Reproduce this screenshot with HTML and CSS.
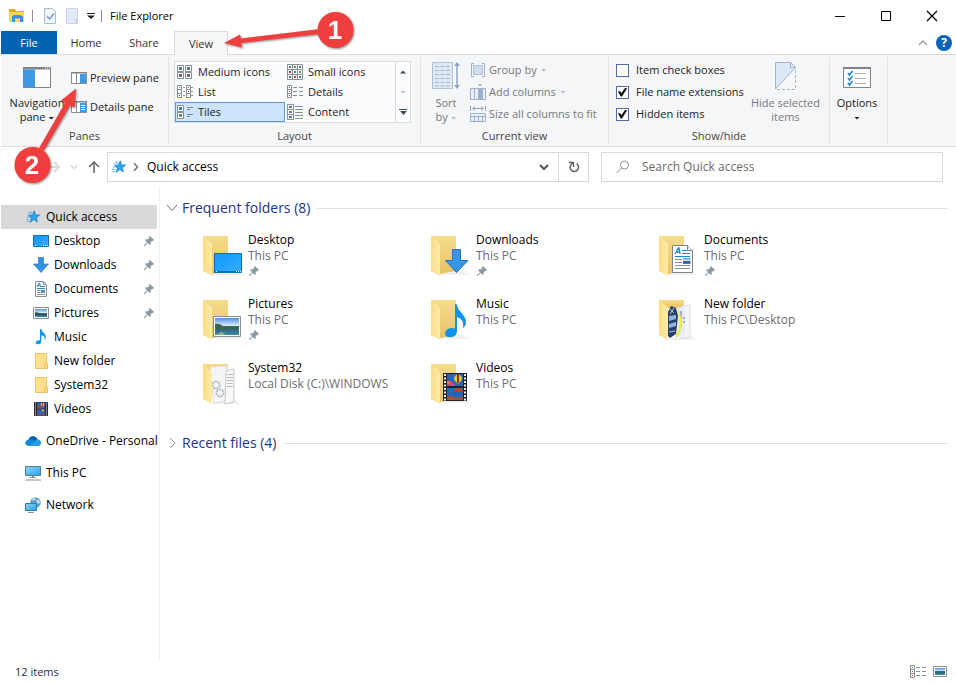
FILE: index.html
```html
<!DOCTYPE html>
<html lang="en">
<head>
<meta charset="utf-8">
<title>File Explorer</title>
<link rel="stylesheet" href="styles.css">
</head>
<body>
<svg class="defs" aria-hidden="true">
  <defs>
    <linearGradient id="gFront" x1="0" x2="1"><stop offset="0" stop-color="#fbdc86"/><stop offset="1" stop-color="#ffeaa9"/></linearGradient>
    <linearGradient id="gBack" x1="0" y1="0" x2="0" y2="1"><stop offset="0" stop-color="#f6dc8c"/><stop offset="1" stop-color="#e8c263"/></linearGradient>
    <linearGradient id="gBlue" x1="0" y1="0" x2="1" y2="1"><stop offset="0" stop-color="#1b97f5"/><stop offset=".5" stop-color="#1fa2ff"/><stop offset="1" stop-color="#3cb0ff"/></linearGradient>
    <linearGradient id="gSky" x1="0" y1="0" x2="0" y2="1"><stop offset="0" stop-color="#4f8fe6"/><stop offset=".45" stop-color="#dcebf8"/><stop offset=".5" stop-color="#3b6b62"/><stop offset=".65" stop-color="#2f6478"/><stop offset="1" stop-color="#3f86b8"/></linearGradient>
    <linearGradient id="gPc" x1="0" y1="0" x2="1" y2="1"><stop offset="0" stop-color="#8bd4fb"/><stop offset="1" stop-color="#2aa0ee"/></linearGradient>
  </defs>
  <symbol id="pin" viewBox="0 0 10 10"><path d="M6 0 10 4 9 5 8.300 4.700 6.600 6.400 6.700 8.300 5.900 9 3.700 6.900 0.800 10 0 10 0 9.200 3.100 6.300 1 4.100 1.700 3.300 3.600 3.400 5.300 1.700 5 1Z" fill="#8d99a3"/></symbol>
  <symbol id="star" viewBox="-1 -1 18 18"><path d="M9.500 1 10.800 5.700 15.500 5.800 11.700 8.800 13 13.500 9 10.900 4.600 14 6.200 9.300 3 6.400 7.300 6Z" fill="#29a5f4" stroke="#1579c4" stroke-width=".8"/><path d="M3.500 2.500h4M2 4.500h5M1 8h3M0 10.500h4M1 13h2.500" stroke="#4aa9e0" stroke-width=".9"/></symbol>
  <symbol id="desktop" viewBox="0 0 16 16"><path d="M.5 2.500h15v11H.5z" fill="url(#gBlue)" stroke="#0b6fb8"/><path d="M2 12.500h1M10 12.500h1M12 12.500h1M14 12.500h1" stroke="#fff"/></symbol>
  <symbol id="down" viewBox="0 0 16 16"><path d="M5.500.5h5v6.500h5L8 15.500.5 7h5z" fill="#3492e4" stroke="#2b78c4" stroke-width=".7"/></symbol>
  <symbol id="doc" viewBox="0 0 16 16"><path d="M2.500.5h8l3 3v12h-11z" fill="#fff" stroke="#8b8f93"/><path d="M10.500.5v3h3" fill="none" stroke="#8b8f93"/><path d="m4 6 2-4h.7l.8 4M4.600 4.700h2.500" fill="none" stroke="#1b85cf"/><path d="M8 5.500h4M4 7.500h8" stroke="#1b85cf"/><path d="M4 9.500h3.500M4 11.500h3.500M4 13.500h8" stroke="#8b8f93"/><path d="M8 9h4v3H8z" fill="#4f8fad"/></symbol>
  <symbol id="picture" viewBox="0 0 16 16"><path d="M.5 2.500h15v11H.5z" fill="#fff" stroke="#8b8f93"/><path d="M2 4h12v8H2z" fill="url(#gSky)"/><path d="M2 7q4 .5 6 1.500T14 9v1.500L2 10z" fill="#285b50"/></symbol>
  <symbol id="music" viewBox="0 0 16 16"><path d="M7 0h1.300Q8.500 2.500 11 4.300q3 2.500 1.200 6l-.9 1q1.500-4.300-3-5v6.200q0 2-2.300 2.700-2.700.6-3.200-1.100-.2-2.200 2.600-2.800 1.300-.1 1.600.1z" fill="#0c94ee"/></symbol>
  <symbol id="folder" viewBox="0 0 16 16"><path d="M2.500.5h11v8.500l1 1v5.500h-12z" fill="#ffe08a" stroke="#eac564"/><path d="M13.500 9 12 10.500v5" fill="none" stroke="#e5b94e"/></symbol>
  <symbol id="video" viewBox="0 0 16 16"><path d="M1 1h14v14H1z" fill="#2b2b2b"/><path d="M4 1.500h8v6H4zM4 8.500h8v6H4z" fill="#2c5fb8"/><path d="M4 5h3l2 1.500v1H4zM4 12.500l4 1 4-1v2H4z" fill="#9c4b32"/><path d="M8 2h3l.7 1.500L10 6 7.500 4zM8 8.500h3.500L10 11z" fill="#e8b632"/><path d="M9 2h1v3.500H9z" fill="#c43824"/><path d="M2.500 1.500v13M13.500 1.500v13" stroke="#ddd" stroke-dasharray="1 1"/></symbol>
  <symbol id="cloud" viewBox="0 0 16 16"><path d="M4.500 13Q.5 13 .2 10 .5 7 3.500 6.500 5 3 8.500 3.200q3 .3 4 3.300 3.200.3 3.300 3.500-.2 3-3.300 3z" fill="#1189d9"/><path d="M3.500 6.500Q5 3 8.500 3.200q3 .3 4 3.300-2 0-3.200 1.200Q6.500 5.900 3.500 6.500z" fill="#0a60b5"/><path d="m4 13 5-3.500 3.500-3q3.200.3 3.300 3.500-.2 3-3.300 3z" fill="#239fe8"/></symbol>
  <symbol id="pc" viewBox="0 0 16 16"><path d="M.5 1.500h15v9H.5z" fill="url(#gPc)" stroke="#4d7f9e"/><path d="M5 12.500h6M0 15h16" stroke="#86929a"/><path d="M7 11h2v1H7z" fill="#86929a"/></symbol>
  <symbol id="network" viewBox="0 0 16 16"><circle cx="10.500" cy="5.500" r="5.200" fill="#5a9cc0"/><path d="M7 2q3-2 4-1l-1 2-2 1zM11 3l3-.5 1 3-2 2z" fill="#bfe0ec"/><path d="M.5 6.500h11v7H.5z" fill="url(#gPc)" stroke="#2f7db3"/><path d="M3 15.500h6" stroke="#86929a"/></symbol>
  <symbol id="bigfolder" viewBox="0 0 44 44"><path d="M6 41h34l-9-5z" fill="#000" opacity=".06"/><path d="M1 2h25v35L10 40z" fill="url(#gBack)"/><path d="M1 2 9 9q1 1 1 3v30L1 37z" fill="url(#gFront)"/></symbol>
  <symbol id="chev" viewBox="0 0 12 12"><path d="m2 4 4 4 4-4" fill="none" stroke="currentColor" stroke-width="2"/></symbol>
  <symbol id="thumb" viewBox="0 0 7 7"><path d="M.5.5h6v6h-6z" fill="#fff" stroke="#8b8f93"/><path d="M2 2h3v3H2z" fill="#4b7fa8"/></symbol>
</svg>

<header class="titlebar">
  <svg class="app" viewBox="0 0 18 16"><path d="M1 1h6l1 2h8v4H1z" fill="#e8a920"/><path d="M1 4h15v10H1z" fill="#ffd75e"/><path d="M4 14V8.500L6 7h6l3 1.500V14h-3v-3.500H7V14z" fill="#3b93e0"/></svg>
  <span class="rule"></span>
  <button class="quick" aria-label="Properties"><svg viewBox="0 0 14 16"><path d="M1.500.5h8l3 3v12h-11z" fill="#f1f5fb" stroke="#a9bbd2"/><path d="m4 8 2.500 3L11 5.500" fill="none" stroke="#8a9fc4" stroke-width="1.600"/></svg></button>
  <button class="quick" aria-label="New folder"><svg viewBox="0 0 14 16"><path d="M1.500.5h11v15h-11z" fill="#e3ebf6" stroke="#c7d5e8"/><path d="M12.500 10 11 11.500v4" fill="none" stroke="#b7c8df"/></svg></button>
  <button class="more" aria-label="Customize Quick Access Toolbar"><svg viewBox="0 0 8 6"><path d="M0 .5h8" stroke="#222"/><path d="M0 2.500h8L4 6z" fill="#222"/></svg></button>
  <span class="rule"></span>
  <h1>File Explorer</h1>
  <div class="window-buttons">
    <button aria-label="Minimize"><svg viewBox="0 0 12 12"><path d="M1 6.500h10" stroke="#000"/></svg></button>
    <button aria-label="Maximize"><svg viewBox="0 0 12 12"><path d="M1.500 1.500h9v9h-9z" fill="none" stroke="#000"/></svg></button>
    <button aria-label="Close"><svg viewBox="0 0 12 12"><path d="m1 1 10 10M11 1 1 11" stroke="#000" stroke-width="1.200"/></svg></button>
  </div>
</header>

<nav class="tabs">
  <button class="file">File</button>
  <button>Home</button>
  <button>Share</button>
  <button class="active">View</button>
  <div class="help">
    <button aria-label="Minimize the Ribbon"><svg class="up" viewBox="0 0 10 8"><path d="m1 6 4-4 4 4" fill="none" stroke="#9a9a9a" stroke-width="1.300"/></svg></button>
    <button class="question" aria-label="Help">?</button>
  </div>
</nav>

<section class="ribbon">
  <div class="group">
    <div class="body panes">
      <button class="large"><svg viewBox="0 0 28 22"><path d="M.5.5h27v20H.5z" fill="#fdfdfe" stroke="#808488"/><path d="M0 0h28v2.500H0z" fill="#808488"/><path d="M1 2.500h11V20H1z" fill="#3e9ae4"/><path d="M22 1h1M24 1h1M26 1h1" stroke="#fff"/></svg><span>Navigation<br>pane <i class="tri"></i></span></button>
      <div class="stack wide">
        <button class="small"><svg viewBox="0 0 16 16"><path d="M.5 2.500h15v11H.5zM5.500 3v10" fill="#fff" stroke="#8b8f93"/><path d="M0 2h16v1.500H0z" fill="#808488"/><path d="M9 4h6v9H9z" fill="#3e9ae4"/></svg>Preview pane</button>
        <button class="small"><svg viewBox="0 0 16 16"><path d="M.5 2.500h15v11H.5zM5.500 3v10" fill="#fff" stroke="#8b8f93"/><path d="M0 2h16v1.500H0z" fill="#808488"/><path d="M9 4h6v9H9z" fill="#3e9ae4"/><path d="M10 6.500h4M10 8.500h4M10 10.500h4" stroke="#fff"/></svg>Details pane</button>
      </div>
    </div>
    <h2>Panes</h2>
  </div>
  <div class="group">
    <div class="body">
      <div class="gallery">
        <div class="views">
          <button><svg viewBox="0 0 16 14"><use href="#thumb" width="7" height="7"/><use href="#thumb" x="8" width="7" height="7"/><use href="#thumb" y="7" width="7" height="7"/><use href="#thumb" x="8" y="7" width="7" height="7"/><path d="M2 10h3M10 10h3" stroke="#c0392b"/></svg>Medium icons</button>
          <button><svg viewBox="0 0 16 16"><path d="M.5.500h15v15H.5zM5.500.500v15M10.500.500v15M.5 5.500h15M.5 10.500h15" fill="#fff" stroke="#8b8f93"/><path d="M2 3h2M12 3h2M7 8h2M2 13h2M12 13h2" stroke="#4b7fa8" stroke-width="2"/><path d="M7 3h2M12 8h2" stroke="#4c9a5c" stroke-width="2"/><path d="M2 8h2M7 13h2" stroke="#b54a3b" stroke-width="2"/></svg>Small icons</button>
          <button><svg viewBox="0 0 16 14"><path d="M.5.500h4v12h-4zM.5 4.500h4M.5 8.500h4M9.500.500h4v12h-4zM9.500 4.500h4M9.500 8.500h4M6 2.500h2M6 6.500h2M6 10.500h2M14 2.500h2M14 6.500h2M14 10.500h2" fill="none" stroke="#8b8f93"/><path d="M2 2.500h1M11 2.500h1" stroke="#2a8a4a"/><path d="M2 10.500h1M11 6.500h1" stroke="#c22"/></svg>List</button>
          <button><svg viewBox="0 0 16 14"><path d="M.5.500h4v12h-4zM.5 4.500h4M.5 8.500h4M6 2.500h4M6 6.500h4M6 10.500h4M12 2.500h4M12 6.500h4M12 10.500h4" fill="none" stroke="#8b8f93"/><path d="M2 2.500h1" stroke="#2a8a4a"/><path d="M2 6.500h1" stroke="#36c"/><path d="M2 10.500h1" stroke="#c22"/></svg>Details</button>
          <button class="selected"><svg viewBox="0 0 16 14"><use href="#thumb" width="7" height="7"/><use href="#thumb" y="7" width="7" height="7"/><path d="M10 2.500h6M10 4.500h3M10 9.500h6M10 11.500h3" stroke="#7d858c"/><path d="M2 11.500h3" stroke="#d9a441"/></svg>Tiles</button>
          <button><svg viewBox="0 0 16 16"><path d="M.5.500h6v15h-6zM.5 5.500h6M.5 10.500h6" fill="#fff" stroke="#8b8f93"/><path d="M2 3h3M2 8h3M2 13h3" stroke="#4b7fa8" stroke-width="2"/><path d="M8 2.500h8M8 8.500h8M8 14.500h8" stroke="#8b8f93"/><path d="M8 5.500h8M8 11.500h8" stroke="#5b9bf0"/></svg>Content</button>
        </div>
        <div class="scroller">
          <button aria-label="Row up"><i class="tri up"></i></button>
          <button aria-label="Row down"><i class="tri pale"></i></button>
          <button aria-label="More"><svg viewBox="0 0 8 6"><path d="M0 .5h8" stroke="#3f4b5c"/><path d="M1 2h7L4.500 6z" fill="#3f4b5c"/></svg></button>
        </div>
      </div>
    </div>
    <h2>Layout</h2>
  </div>
  <div class="group">
    <div class="body current">
      <button class="large off" disabled><svg viewBox="0 0 28 28"><path d="M.5.500h20v26H.5z" fill="#dfe8f5" stroke="#b3c1da"/><path d="M3 4.500h15M3 8.500h15M3 12.500h15M3 16.500h15M3 20.500h15M3 24h15" stroke="#a9b9d6" stroke-dasharray="4 1.500"/><path d="M25 2v23" stroke="#8fa4c8" stroke-width="1.500"/><path d="m25 0 3 4h-6zM25 27l3-4h-6z" fill="#8fa4c8"/></svg><span>Sort<br>by <i class="tri pale"></i></span></button>
      <div class="stack">
        <button class="small off" disabled><svg viewBox="0 0 16 16"><path d="M4 1.500H1.500v13H4M12 1.500h2.500v13H12" fill="none" stroke="#9fb0cc"/><path d="M3.500 3.500h9v9h-9z" fill="#cfdcf0" stroke="#b3c1da"/></svg>Group by <i class="tri pale"></i></button>
        <button class="small off" disabled><svg viewBox="0 0 16 16"><path d="M.5 4.500h15v11H.5zM4.500 4.500v11M12.500 4.500v11" fill="#e9eff8" stroke="#9fb0cc"/><path d="M8 4h4v11H8zM8 0h4l-2 2.500z" fill="#9fb0cc"/></svg>Add columns <i class="tri pale"></i></button>
        <button class="small off" disabled><svg viewBox="0 0 16 16"><path d="M.5 7.500h15v8H.5zM.5 10.500h15M4.500 10v5M8.500 10v5M12.500 10v5" fill="#e9eff8" stroke="#9fb0cc"/><path d="M.5 0v5M15.500 0v5M3 2.500h10M5 .5l-2.500 2L5 4.500M11 .5l2.500 2-2.500 2" fill="none" stroke="#8fa4c8"/></svg>Size all columns to fit</button>
      </div>
    </div>
    <h2>Current view</h2>
  </div>
  <div class="group">
    <div class="body show">
      <div class="stack">
        <label class="small"><input type="checkbox">Item check boxes</label>
        <label class="small"><input type="checkbox" checked>File name extensions</label>
        <label class="small"><input type="checkbox" checked>Hidden items</label>
      </div>
      <button class="large off" disabled><svg viewBox="0 0 28 28"><path d="M4 .500h16l5 5L4 27.500z" fill="#dde9f8"/><path d="M25 5.500h-5.500V.500M4.500 27V.500h15l5 5L4.500 27" fill="none" stroke="#a4b4cf"/><path d="M24.500 8v19.500H4" fill="none" stroke="#a4b4cf" stroke-dasharray="3 2"/></svg><span>Hide selected<br>items</span></button>
    </div>
    <h2>Show/hide</h2>
  </div>
  <div class="group">
    <div class="body options">
      <button class="large"><svg viewBox="0 0 28 22"><path d="M.5.500h27v20H.5z" fill="#fdfdfe" stroke="#808488"/><path d="M0 0h28v2H0z" fill="#808488"/><path d="M12 6.500h11M12 11.500h11M12 16.500h11" stroke="#b0b4b8"/><path d="m5 6 1.500 2L9.500 4M5 11l1.500 2 3-4M5 16l1.500 2 3-4" fill="none" stroke="#2e8fdc" stroke-width="1.800"/></svg><span>Options<br><i class="tri"></i></span></button>
    </div>
  </div>
</section>

<div class="location">
  <div class="history">
    <button aria-label="Back"><svg viewBox="0 0 12 12"><path d="M11 6H1M6 1 1 6l5 5" fill="none" stroke="#ccc" stroke-width="2"/></svg></button>
    <button aria-label="Forward"><svg viewBox="0 0 12 12"><path d="M0 6h11M6 1l5 5-5 5" fill="none" stroke="#ddd" stroke-width="2"/></svg></button>
    <button aria-label="Recent locations" class="recent"><svg viewBox="0 0 12 12"><use href="#chev"/></svg></button>
    <button aria-label="Up"><svg viewBox="0 0 12 12"><path d="M6 12V1M1 6l5-5 5 5" fill="none" stroke="#6d6d6d" stroke-width="1.600"/></svg></button>
  </div>
  <div class="address">
    <svg class="i16"><use href="#star"/></svg>
    <svg class="crumb" viewBox="0 0 6 8"><path d="m1 0 3.500 4L1 8" fill="none" stroke="#777" stroke-width="1.500"/></svg>
    <button class="place">Quick access</button>
    <button class="drop" aria-label="Previous locations"><svg class="i12"><use href="#chev"/></svg></button>
    <button class="refresh" aria-label="Refresh"><svg viewBox="0 0 12 12"><path d="M8.500 2.700A4.200 4.200 0 1 1 3.500 3.200L5 2" fill="none" stroke="#606060" stroke-width="1.500"/><path d="M1 1.500h4.500V6" fill="none" stroke="#606060" stroke-width="1.400"/></svg></button>
  </div>
  <label class="search"><svg viewBox="0 0 14 14"><circle cx="8.500" cy="5" r="4" fill="none" stroke="#87919b"/><path d="m5.500 8-5 5" stroke="#87919b"/></svg><input type="text" aria-label="Search Quick access" placeholder="Search Quick access"></label>
</div>

<div class="content">
  <nav class="tree">
    <a href="#" class="root current"><svg class="i16"><use href="#star"/></svg>Quick access</a>
    <a href="#"><svg class="i16"><use href="#desktop"/></svg>Desktop<svg class="pin"><use href="#pin"/></svg></a>
    <a href="#"><svg class="i16"><use href="#down"/></svg>Downloads<svg class="pin"><use href="#pin"/></svg></a>
    <a href="#"><svg class="i16"><use href="#doc"/></svg>Documents<svg class="pin"><use href="#pin"/></svg></a>
    <a href="#"><svg class="i16"><use href="#picture"/></svg>Pictures<svg class="pin"><use href="#pin"/></svg></a>
    <a href="#"><svg class="i16"><use href="#music"/></svg>Music</a>
    <a href="#"><svg class="i16"><use href="#folder"/></svg>New folder</a>
    <a href="#"><svg class="i16"><use href="#folder"/></svg>System32</a>
    <a href="#"><svg class="i16"><use href="#video"/></svg>Videos</a>
    <a href="#" class="root"><svg class="i16"><use href="#cloud"/></svg>OneDrive - Personal</a>
    <a href="#" class="root"><svg class="i16"><use href="#pc"/></svg>This PC</a>
    <a href="#" class="root"><svg class="i16"><use href="#network"/></svg>Network</a>
  </nav>
  <main>
    <h2 class="section"><svg class="fold" viewBox="0 0 12 12"><path d="m1 3 5 5.500L11 3" fill="none" stroke="#6d6d6d"/></svg>Frequent folders (8)</h2>
    <div class="tiles">
      <a href="#"><svg viewBox="0 0 44 44"><use href="#bigfolder"/><path d="M12.500 19.500h27v19h-27z" fill="url(#gBlue)" stroke="#0b6fb8"/><path d="M13 37.500h26" stroke="#0b6fb8"/><path d="M14 37.500h1M34 37.500h1M36 37.500h1M38 37.500h1" stroke="#fff"/></svg><span>Desktop<small>This PC</small><svg class="pin"><use href="#pin"/></svg></span></a>
      <a href="#"><svg viewBox="0 0 44 44"><use href="#bigfolder"/><path d="M22.500 15.500h8v11h7.500L26.500 38.500 15.500 26.500h7z" fill="#3995e6" stroke="#2873bd"/></svg><span>Downloads<small>This PC</small><svg class="pin"><use href="#pin"/></svg></span></a>
      <a href="#"><svg viewBox="0 0 44 44"><use href="#bigfolder"/><path d="M14.500 11.500h15l5 5v22h-20z" fill="#fff" stroke="#808488"/><path d="M29.500 11.500v5h5" fill="#e9edf0" stroke="#808488"/><path d="m17 20 3.500-6H21l1 6M18 18h4" fill="none" stroke="#1b85cf" stroke-width="1.300"/><path d="M24 16.500h5M24 19.500h8M17 22.500h15" stroke="#1b85cf"/><path d="M17 25.500h7M17 28.500h7M17 31.500h15M17 34.500h15" stroke="#8b8f93"/><path d="M25 24h7.500v6H25z" fill="url(#gSky)"/></svg><span>Documents<small>This PC</small><svg class="pin"><use href="#pin"/></svg></span></a>
      <a href="#"><svg viewBox="0 0 44 44"><use href="#bigfolder"/><path d="M11.500 18.500h27v20h-27z" fill="#fff" stroke="#8b8f93"/><path d="M13 20h24v17H13z" fill="url(#gSky)"/><path d="M13 26q4-1 8 2 6 1 16 .5v2q-12 2-24 .5z" fill="#3d6659"/><path d="m13 37 7-3 4 3z" fill="#8fb37f"/></svg><span>Pictures<small>This PC</small><svg class="pin"><use href="#pin"/></svg></span></a>
      <a href="#"><svg viewBox="0 0 44 44"><use href="#bigfolder"/><path d="M25 6h1.500q1 5 5 9 6 6 4 12-1 2-2.500 3 2-8-6-11v14q0 5-5 6-6 1-7-3 0-5 6-6 3 0 4 .5z" fill="#0c94ee"/></svg><span>Music<small>This PC</small></span></a>
      <a href="#"><svg viewBox="0 0 44 44"><path d="M6 42h32l-5-5z" fill="#000" opacity=".06"/><path d="M1 2h25v8H1z" fill="url(#gBack)"/><path d="m24 8 8-1v32l-8 2z" fill="#f3f4f6" stroke="#ddd"/><path d="m19 10 8-2v29l-9 3z" fill="#e6ebf7"/><path d="M23 13v16M25 20h2M25 24h2" stroke="#a4a4e0" stroke-width="2"/><path d="M19 12q6 14-2 28l4-3q6-13 0-24z" fill="#f4ed2c"/><path d="m9 16 4-8 5 2 2 8-2 18-6 4-3-3z" fill="#27406b"/><path d="m11 18 7-1v4l-7 2zM11 26l7-2v4l-7 2z" fill="#8fb5df"/><path d="m12 11 4 4M16 10l-4 6M11 34l6-1" stroke="#bcc8d8"/><path d="M1 2 9 9q1 1 1 3v30L1 37z" fill="url(#gFront)"/></svg><span>New folder<small>This PC\Desktop</small></span></a>
      <a href="#"><svg viewBox="0 0 44 44"><path d="M6 42h32l-5-5z" fill="#000" opacity=".06"/><path d="M1 2h25v8H1z" fill="url(#gBack)"/><path d="m8 5 17-1 1 34-14 4z" fill="#f5f5f5" stroke="#ddd"/><path d="m24 9 8-2v33l-9 2z" fill="#f8f8f8" stroke="#c9c9c9"/><path d="M25 12.500h6M25 15.500h6M25 18.500h6M25 21.500h6M25 24.500h6" stroke="#bbb"/><circle cx="14" cy="23" r="3.500" fill="none" stroke="#a9b8c2" stroke-width="2" stroke-dasharray="2 1"/><circle cx="18" cy="31" r="3.500" fill="none" stroke="#a9b8c2" stroke-width="2" stroke-dasharray="2 1"/><path d="M1 2 9 9q1 1 1 3v30L1 37z" fill="url(#gFront)"/></svg><span>System32<small>Local Disk (C:)\WINDOWS</small></span></a>
      <a href="#"><svg viewBox="0 0 44 44"><use href="#bigfolder"/><path d="M13 11h24v28H13z" fill="#222"/><path d="M17 12h16v12H17zM17 26h16v12H17z" fill="#2763ba"/><path d="M17 20q4-3 8 3v1h-8z" fill="#c6478f"/><path d="M17 19h3v3h-3z" fill="#e8743a"/><path d="M28 12q6 3 3 7l-3 3-3-3q-3-4 3-7z" fill="#e6cc33"/><path d="M27 12h2v9h-2z" fill="#8c2b24"/><path d="M26 26h6l-3 5zM17 35l5-1 3 2 8-1v3H17z" fill="#a5562c"/><path d="M24 28h8" stroke="#d73423" stroke-width="2"/><path d="M15 12v27M35 12v27" stroke="#eee" stroke-width="2" stroke-dasharray="2 1.500"/></svg><span>Videos<small>This PC</small></span></a>
    </div>
    <h2 class="section"><svg class="fold" viewBox="0 0 12 12"><path d="m4 1 5 5-5 5" fill="none" stroke="#8a8a8a"/></svg>Recent files (4)</h2>
  </main>
</div>

<footer>
  <span>12 items</span>
  <div class="modes">
    <button aria-label="Details view"><svg viewBox="0 0 16 14"><path d="M.5.500h4v12h-4zM.5 4.500h4M.5 8.500h4M6 2.500h4M6 6.500h4M6 10.500h4M12 2.500h4M12 6.500h4M12 10.500h4" fill="none" stroke="#8b8f93"/><path d="M2 2.500h1" stroke="#2a8a4a"/><path d="M2 6.500h1" stroke="#36c"/><path d="M2 10.500h1" stroke="#c22"/></svg></button>
    <button aria-label="Large icons view"><svg viewBox="0 0 16 14"><path d="M1.500 1.500h13v10h-13z" fill="#fff" stroke="#8b8f93"/><path d="M3 3h10v7H3z" fill="url(#gSky)"/></svg></button>
  </div>
</footer>

<svg class="callouts" viewBox="0 0 360 190" role="img" aria-label="Step 1: View tab. Step 2: Preview pane">
  <g fill="#f03e3e" stroke="none">
    <path d="M320 29 241 38.500 240 34.500 224 43 242 47.500 241 43 320 34z"/>
    <path d="M38 150 65 103 61 100.500 76 88.500 74.500 107.500 70 105.500 44 150z"/>
    <circle cx="335.500" cy="30" r="18"/>
    <circle cx="32.500" cy="165" r="18"/>
  </g>
  <g class="numbers"><text x="335" y="39">1</text><text x="32" y="174">2</text></g>
</svg>
</body>
</html>
```
FILE: styles.css
```css
* { box-sizing: border-box; }
body {
  margin: 0;
  min-height: 100vh;
  display: flex;
  flex-direction: column;
  position: relative;
  padding-left: 1px;
  background: #fff;
  color: #111;
  font: 12px/16px "Open Sans", "Noto Sans", sans-serif;
}
button, input { font: inherit; color: inherit; }
button { border: 0; padding: 0; background: none; }
a { color: inherit; text-decoration: none; }
h1, h2 { margin: 0; font-size: inherit; font-weight: 400; }
svg { display: block; flex: none; }
.defs { position: absolute; width: 0; height: 0; }
.i16 { width: 16px; height: 16px; }
.i12 { width: 12px; height: 12px; }
.pin { width: 10px; height: 10px; }
.titlebar, .tabs, .ribbon, footer { font-size: 11px; }

.titlebar { display: flex; align-items: center; height: 31px; padding: 0 1px 0 7px; }
.app { width: 18px; height: 16px; }
.rule { width: 1px; height: 12px; margin: 0 8px 0 6px; background: #8a8a8a; }
.app + .rule { margin-right: 10px; }
.quick { margin-right: 8px; }
.quick svg { width: 14px; height: 16px; }
.more svg { width: 8px; height: 6px; }
.titlebar h1 { color: #000; }
.window-buttons { display: flex; margin-left: auto; }
.window-buttons button { width: 46px; height: 30px; display: grid; place-items: center; }
.window-buttons svg { width: 12px; height: 12px; }

.tabs { display: flex; height: 24px; border-bottom: 1px solid #dadbdc; }
.tabs > button { width: 58px; height: 23px; color: #333; }
.tabs .file { width: 56px; background: #0063b1; color: #fff; }
.tabs .active { width: 54px; height: 24px; border: 1px solid #dadbdc; border-bottom: 0; background: #f5f6f7; }
.tabs > :nth-child(3) { margin-right: 1px; }
.help { display: flex; align-items: center; gap: 8px; margin-left: auto; padding-right: 4px; }
.up { width: 10px; height: 8px; }
.question { width: 16px; height: 16px; border-radius: 50%; background: #0a63b8; color: #fff; font-size: 12px; font-weight: 700; line-height: 16px; }

.ribbon {
  display: grid;
  grid-template-columns: 168px 252px 188px 221px 58px 1fr;
  min-height: 92px;
  padding: 2px 0;
  background: #f5f6f7;
  border-bottom: 1px solid #dadbdc;
  color: #222;
}
.group { display: flex; flex-direction: column; border-right: 1px solid #e2e3e4; padding: 4px 5px 0; }
.body { height: 67px; display: flex; }
.group h2 { text-align: center; color: #444; }
.large { display: flex; flex-direction: column; align-items: center; justify-content: space-between; line-height: 14px; padding: 1px 0 4px; white-space: nowrap; }
.large svg { width: 28px; height: 28px; }
.panes .large svg, .options .large svg { height: 22px; margin-top: 5px; }
.options { justify-content: center; padding-right: 3px; }
.stack { display: flex; flex-direction: column; gap: 6px; padding-top: 1px; }
.wide { gap: 13px; padding-top: 9px; }
.small { display: flex; align-items: center; gap: 3px; height: 16px; white-space: nowrap; }
.small svg { width: 16px; height: 16px; }
.off { color: #76797c; }
.tri { display: inline-block; width: 6px; height: 3px; background: #222; clip-path: polygon(0 0, 100% 0, 50% 100%); vertical-align: middle; }
.tri.up { background: #3f4b5c; clip-path: polygon(50% 0, 100% 100%, 0 100%); }
.tri.pale { background: #b5b9be; }
.small .tri { margin-left: 1px; }
.panes { gap: 3px; }
.panes .large { width: 62px; }
.current { padding-left: 6px; gap: 10px; }
.show { justify-content: space-between; padding: 0 4px 0 2px; }
.show .small { gap: 7px; }
.small input { appearance: none; width: 13px; height: 13px; margin: 0; border: 1px solid #4f69a3; background: #fff; display: grid; place-items: center; }
.small input:checked::before { content: ""; width: 9px; height: 9px; background: #111; clip-path: polygon(0 45%, 22% 40%, 38% 62%, 82% 0, 100% 10%, 45% 100%, 30% 100%); }

.gallery { display: flex; flex: 1; height: 62px; margin-right: 4px; border: 1px solid #dadbdc; background: #fbfcfd; }
.views { flex: 1; display: grid; grid-template-columns: 1fr 1fr; grid-auto-rows: 20px; }
.views button { display: flex; align-items: center; gap: 5px; padding-left: 2px; text-align: left; white-space: nowrap; }
.views svg { width: 16px; height: 16px; }
.views .selected { padding-left: 1px; border: 1px solid #569de5; background: #cce4fc; }
.scroller { width: 15px; display: grid; grid-auto-rows: 20px; border-left: 1px solid #dadbdc; }
.scroller button { display: grid; place-items: center; }
.scroller svg { width: 8px; height: 6px; }

.location { display: grid; grid-template-columns: 106px 482fr 354fr; height: 40px; align-items: center; padding-right: 13px; }
.history { display: flex; align-items: center; justify-content: flex-end; padding-right: 7px; gap: 9px; }
.history svg { width: 12px; height: 12px; }
.recent { color: #ddd; }
.recent svg { width: 10px; height: 10px; }
.address, .search { display: flex; align-items: center; height: 30px; min-width: 0; border: 1px solid #d9d9d9; }
.address { padding-left: 3px; color: #000; }
.crumb { width: 6px; height: 8px; margin: 0 8px 0 6px; }
.drop { margin-left: auto; padding-right: 8px; color: #555; }
.refresh { width: 30px; height: 28px; display: grid; place-items: center; border-left: 1px solid #d9d9d9; }
.refresh svg { width: 12px; height: 12px; }
.search { margin-left: 12px; padding-left: 14px; gap: 12px; color: #6b6b6b; }
.search svg { width: 14px; height: 14px; }
.search input { flex: 1; min-width: 0; border: 0; padding: 0; outline: 0; }
.search input::placeholder { color: #6b6b6b; opacity: 1; }

.content { display: flex; flex: 1; }
.tree { width: 159px; padding: 18px 2px 0 0; border-right: 1px solid #f0f0f0; color: #000; }
.tree a { display: flex; align-items: center; gap: 5px; height: 24px; padding: 0 3px 0 32px; white-space: nowrap; }
.tree .root { margin-top: 8px; padding-left: 24px; }
.tree .current { margin-top: 0; background: #d9d9d9; }
.tree .pin { margin-left: auto; }
main { flex: 1; padding: 11px 8px 0 6px; }
.section { display: flex; align-items: center; gap: 4px; font-size: 14px; line-height: 20px; color: #1e3287; }
.section::after { content: ""; flex: 1; height: 1px; margin-left: 3px; background: #e2e2e2; }
.fold { width: 12px; height: 12px; }
.tiles { display: grid; grid-template-columns: repeat(auto-fill, 228px); grid-auto-rows: 64px; padding: 14px 0 9px 36px; color: #000; }
.tiles a { display: flex; gap: 2px; }
.tiles a > svg { width: 44px; height: 44px; margin-top: 2px; }
.tiles small { display: block; font-size: 12px; color: #6d6d6d; }
.tiles .pin { margin: 2px 0 0 1px; }

footer { display: flex; align-items: center; height: 24px; padding: 0 8px 0 14px; color: #1e2b4f; }
.modes { display: flex; gap: 6px; margin-left: auto; }
.modes svg { width: 16px; height: 14px; }

.callouts { position: absolute; left: 0; top: 0; width: 360px; height: 190px; pointer-events: none; filter: drop-shadow(1px 1px 1px rgb(0 0 0 / 45%)); }
.numbers { font: 700 26px/1 "Liberation Sans", sans-serif; fill: #fff; text-anchor: middle; }
```
